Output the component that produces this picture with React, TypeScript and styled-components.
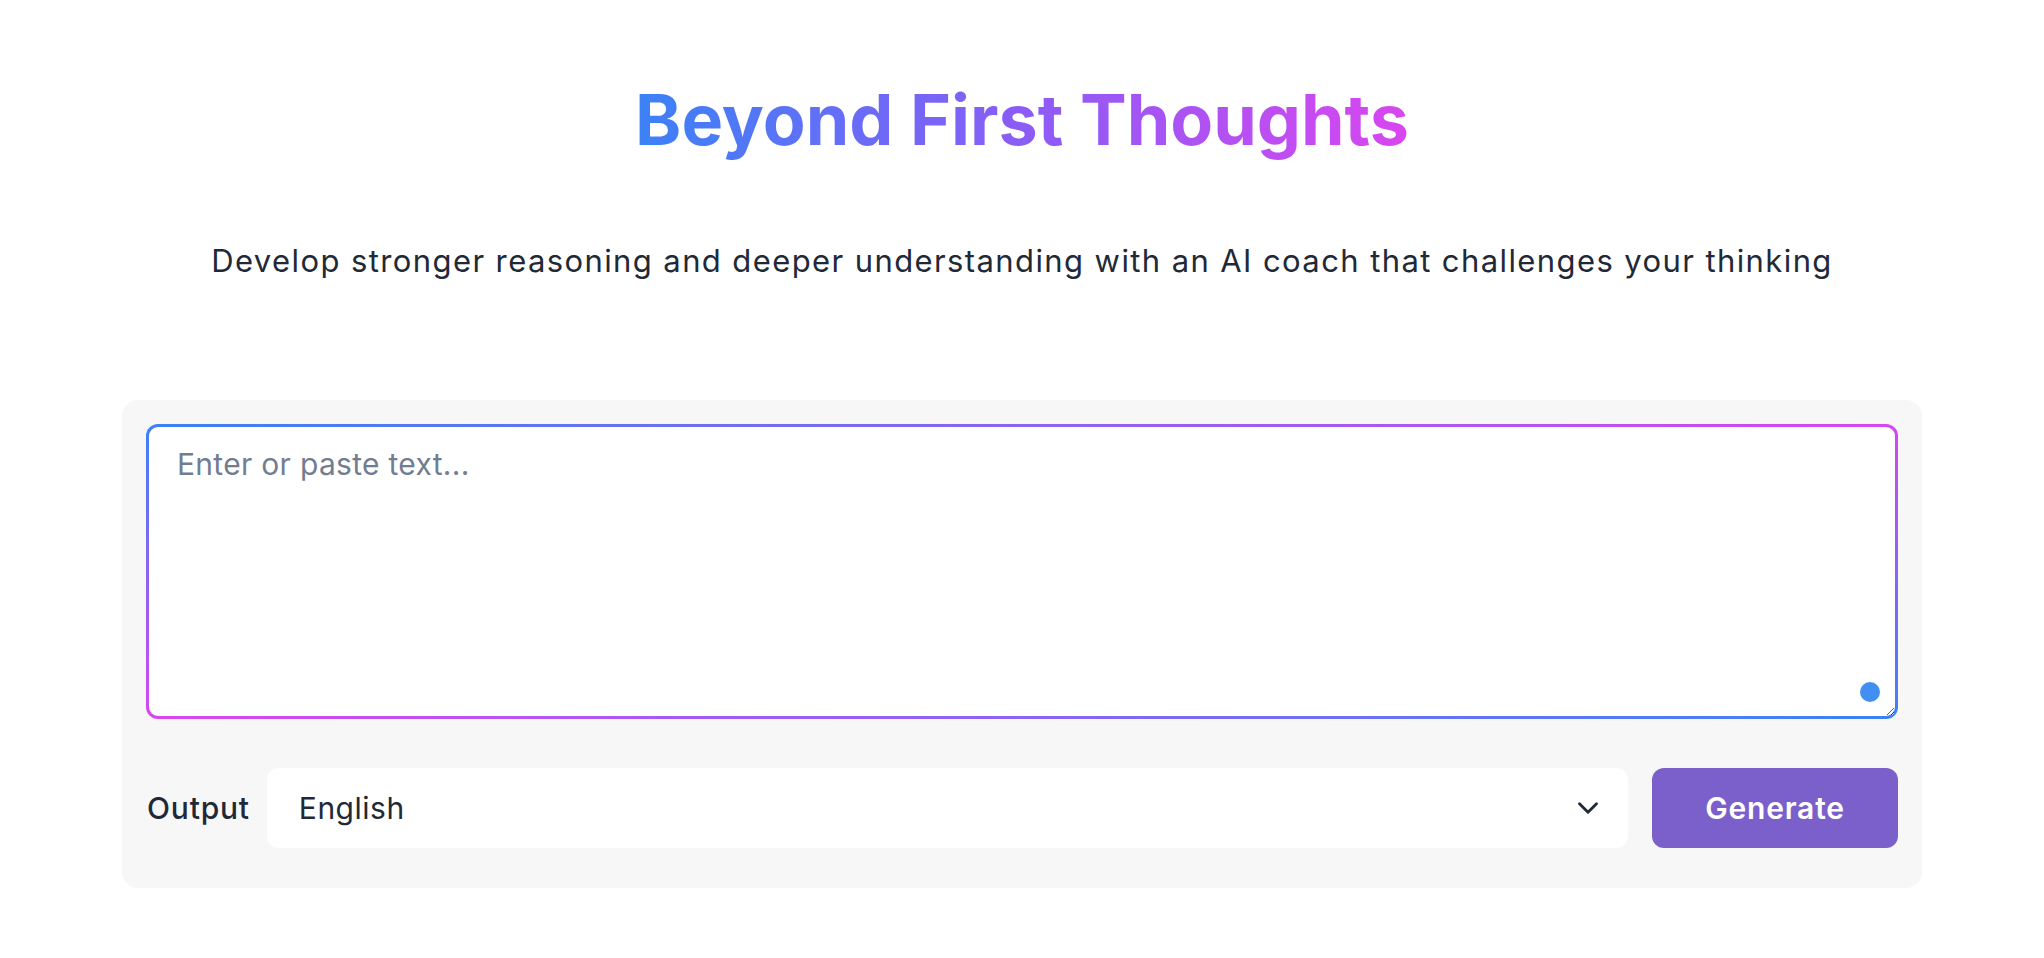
import styled, { createGlobalStyle } from 'styled-components';
import { ChevronDown } from 'lucide-react';

const BLUE = '#3b82f6';
const PINK = '#d946ef';

const GlobalStyle = createGlobalStyle`
  body {
    margin: 0;
    background: #ffffff;
    font-family: Inter, "Noto Sans", sans-serif;
    color: #1f2937;
  }
`;

const App = () => {
  return (
    <Page>
      <GlobalStyle />
      <Title>Beyond First Thoughts</Title>
      <Subtitle>
        Develop stronger reasoning and deeper understanding with an AI coach that challenges your thinking
      </Subtitle>
      <Card>
        <EditorWrap>
          <Editor placeholder="Enter or paste text..." />
          <StatusDot />
        </EditorWrap>
        <Controls>
          <Label htmlFor="lang">Output</Label>
          <SelectWrap>
            <Select id="lang" defaultValue="English">
              <option>English</option>
              <option>Español</option>
              <option>Français</option>
              <option>Deutsch</option>
            </Select>
            <Chevron size={34} strokeWidth={2} />
          </SelectWrap>
          <GenerateButton>Generate</GenerateButton>
        </Controls>
      </Card>
    </Page>
  );
};

const Page = styled.main`
  width: 1800px;
  margin: 0 auto;
  padding-top: 78px;
`;

const Title = styled.h1`
  margin: 0 auto;
  width: fit-content;
  text-align: center;
  font-size: 70px;
  line-height: 84px;
  font-weight: 700;
  background: linear-gradient(90deg, ${BLUE}, #8b5cf6 50%, ${PINK});
  -webkit-background-clip: text;
  background-clip: text;
  color: transparent;
`;

const Subtitle = styled.p`
  margin: 76px 0 0;
  text-align: center;
  font-size: 31px;
  line-height: 45px;
  letter-spacing: 1.4px;
  color: #1f2937;
`;

const Card = styled.section`
  margin-top: 117px;
  background: #f7f7f7;
  border-radius: 16px;
  padding: 24px 24px 40px;
`;

const EditorWrap = styled.div`
  position: relative;
`;

const Editor = styled.textarea`
  display: block;
  box-sizing: border-box;
  width: 100%;
  height: 295px;
  margin: 0;
  padding: 15px 28px;
  border: 3px solid transparent;
  border-radius: 12px;
  background:
    linear-gradient(#fff, #fff) padding-box,
    linear-gradient(180deg, ${BLUE}, ${PINK}) left / 14px 100% no-repeat border-box,
    linear-gradient(180deg, ${PINK}, ${BLUE}) right / 14px 100% no-repeat border-box,
    linear-gradient(90deg, ${BLUE}, ${PINK}) top / 100% 50% no-repeat border-box,
    linear-gradient(90deg, ${PINK}, ${BLUE}) bottom / 100% 50% no-repeat border-box;
  font-family: Inter, "Noto Sans", sans-serif;
  font-size: 30px;
  line-height: 45px;
  letter-spacing: 0.3px;
  color: #1f2937;
  outline: none;
  resize: vertical;
  &::placeholder {
    color: #737d90;
  }
`;

const StatusDot = styled.span`
  position: absolute;
  right: 18px;
  bottom: 17px;
  width: 20px;
  height: 20px;
  border-radius: 50%;
  background: #428ff2;
`;

const Controls = styled.div`
  display: flex;
  align-items: center;
  margin-top: 49px;
`;

const Label = styled.label`
  font-size: 30px;
  font-weight: 500;
  letter-spacing: 0.8px;
  color: #1f2937;
  margin-right: 17px;
  padding-left: 1px;
`;

const SelectWrap = styled.div`
  position: relative;
  flex: 1;
  display: flex;
`;

const Select = styled.select`
  appearance: none;
  flex: 1;
  height: 80px;
  border: none;
  border-radius: 12px;
  background: #ffffff;
  padding: 0 32px;
  font-family: Inter, "Noto Sans", sans-serif;
  font-size: 30px;
  letter-spacing: 0.5px;
  color: #1f2937;
  outline: none;
`;

const Chevron = styled(ChevronDown)`
  position: absolute;
  right: 23px;
  top: 50%;
  transform: translateY(-50%);
  color: #1f2937;
  pointer-events: none;
`;

const GenerateButton = styled.button`
  width: 246px;
  height: 80px;
  margin-left: 24px;
  border: none;
  border-radius: 12px;
  background: #7b5fcb;
  color: #ffffff;
  font-family: Inter, "Noto Sans", sans-serif;
  font-size: 30px;
  font-weight: 600;
  letter-spacing: 0.8px;
  cursor: pointer;
`;

export default App;
